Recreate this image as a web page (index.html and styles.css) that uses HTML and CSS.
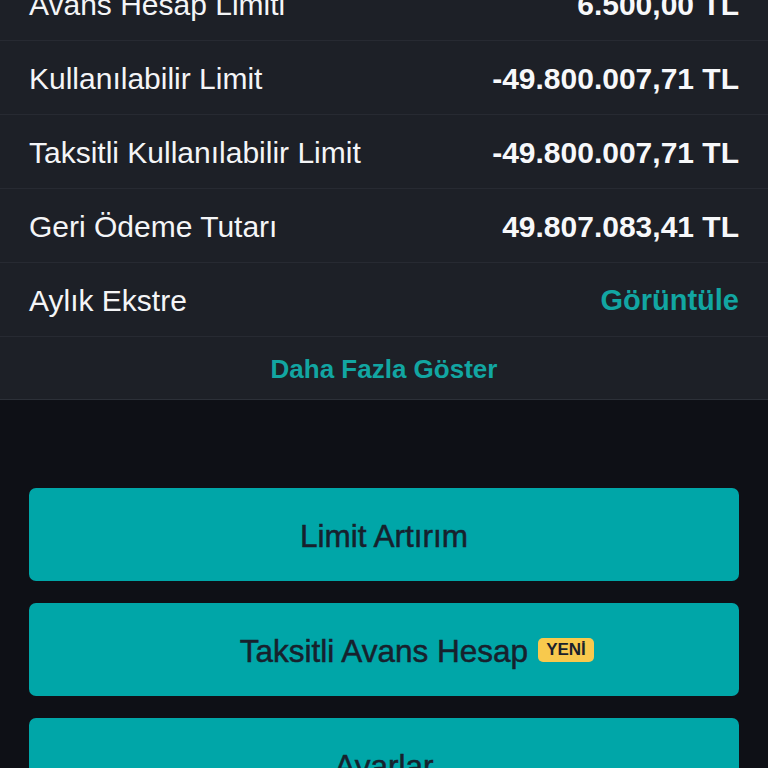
FILE: index.html
```html
<!DOCTYPE html>
<html lang="tr">
<head>
<meta charset="utf-8">
<title>Avans Hesap</title>
<link rel="stylesheet" href="styles.css">
</head>
<body>
<main class="screen">
  <section class="details">
    <div class="row"><span class="label">Avans Hesap Limiti</span><span class="value">6.500,00 TL</span></div>
    <div class="row"><span class="label">Kullanılabilir Limit</span><span class="value">-49.800.007,71 TL</span></div>
    <div class="row"><span class="label">Taksitli Kullanılabilir Limit</span><span class="value">-49.800.007,71 TL</span></div>
    <div class="row"><span class="label">Geri Ödeme Tutarı</span><span class="value">49.807.083,41 TL</span></div>
    <div class="row"><span class="label">Aylık Ekstre</span><span class="value link">Görüntüle</span></div>
    <div class="more">Daha Fazla Göster</div>
  </section>
  <section class="actions">
    <button class="action"><span class="side"></span><span class="text">Limit Artırım</span><span class="side"></span></button>
    <button class="action"><span class="side"></span><span class="text">Taksitli Avans Hesap</span><span class="side"><span class="badge">YENİ</span></span></button>
    <button class="action"><span class="side"></span><span class="text">Ayarlar</span><span class="side"></span></button>
  </section>
</main>
</body>
</html>
```
FILE: styles.css
```css
html, body {
  margin: 0;
  padding: 0;
  background: #0e1016;
  height: 100%;
  overflow: hidden;
}
body {
  font-family: "Liberation Sans", Arial, sans-serif;
  color: #ffffff;
}
.screen {
  display: flex;
  flex-direction: column;
}
.details {
  background: #1d2027;
  margin-top: -33px;
  border-bottom: 1px solid #2c3038;
}
.row {
  box-sizing: border-box;
  height: 74px;
  padding: 0 29px;
  display: flex;
  align-items: center;
  justify-content: space-between;
  border-bottom: 1px solid #272a32;
}
.label {
  font-size: 30px;
  color: #f4f5f7;
  padding-top: 2px;
}
.value {
  font-size: 30px;
  font-weight: 700;
  color: #f7f8fa;
  padding-top: 2px;
}
.link {
  font-size: 29px;
  color: #12a6a2;
}
.more {
  height: 62px;
  display: flex;
  align-items: center;
  justify-content: center;
  font-size: 26px;
  font-weight: 700;
  color: #12a6a2;
  padding-top: 3px;
  box-sizing: border-box;
}
.actions {
  padding: 88px 29px 0;
  display: flex;
  flex-direction: column;
  gap: 22px;
}
.action {
  height: 93px;
  border: none;
  border-radius: 7px;
  background: #00a6a8;
  color: #17212d;
  font-family: "Liberation Sans", Arial, sans-serif;
  font-size: 31.5px;
  -webkit-text-stroke: 0.5px #17212d;
  display: grid;
  grid-template-columns: 1fr auto 1fr;
  align-items: center;
  padding: 4px 0 0;
}
.side {
  display: flex;
  justify-content: flex-start;
  padding-left: 10px;
}
.badge {
  display: inline-flex;
  align-items: center;
  justify-content: center;
  height: 24px;
  padding: 0 8px;
  border-radius: 5px;
  background: #f8c94d;
  color: #1b222c;
  -webkit-text-stroke: 0;
  font-size: 17px;
  font-weight: 700;
  margin-top: -3px;
}
```
